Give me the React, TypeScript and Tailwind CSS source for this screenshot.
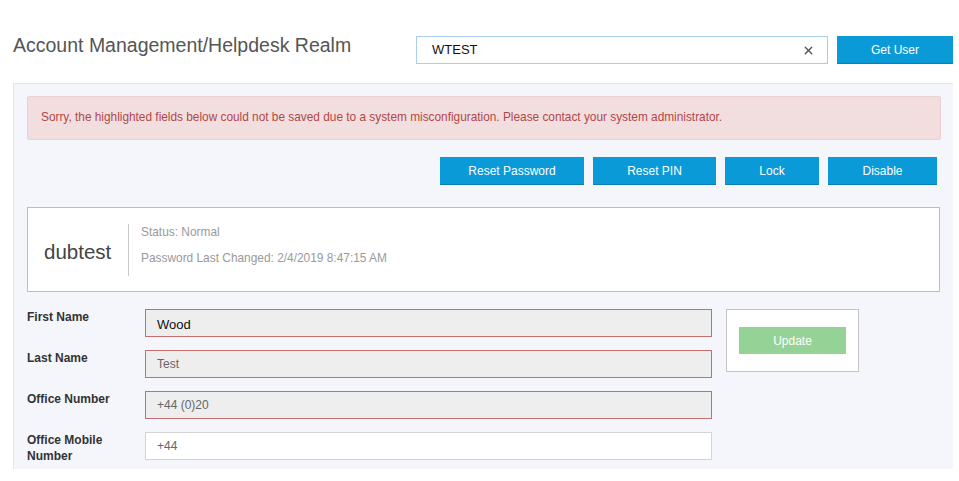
import { X } from "lucide-react";

const fields = [
  { label: "First Name", value: "Wood", error: true, strong: true },
  { label: "Last Name", value: "Test", error: true },
  { label: "Office Number", value: "+44 (0)20", error: true },
  { label: "Office Mobile Number", value: "+44", error: false },
];

const actions = [
  { label: "Reset Password", w: "w-[144px]" },
  { label: "Reset PIN", w: "w-[123px]" },
  { label: "Lock", w: "w-[94px]" },
  { label: "Disable", w: "w-[109px]" },
];

export default function App() {
  return (
    <div className="h-[481px] w-[959px] overflow-hidden bg-white font-['Liberation_Sans',Arial,sans-serif]">
      {/* header */}
      <header className="flex h-[83px] items-center pl-[13px] pt-[36px] pb-[19px]">
        <h1 className="mb-[10px] w-[403px] text-[19.5px] leading-[28px] text-[#555]">
          Account Management/Helpdesk Realm
        </h1>
        <div className="flex h-[28px] w-[412px] items-center border border-[#a9cdee] bg-white pl-[15px] pr-[12px]">
          <span className="flex-1 text-[13px] text-[#111]">WTEST</span>
          <X size={13} strokeWidth={2.5} className="text-[#555]" />
        </div>
        <button className="ml-[9px] h-[28px] w-[116px] border-b border-[#0a7fb4] bg-[#0b9ad8] text-[12px] text-white">
          Get User
        </button>
      </header>

      {/* panel */}
      <section className="ml-[13px] h-[386px] w-[940px] overflow-hidden border-l border-t border-[#e3e5ee] bg-[#f5f6fb] pl-[13px] pr-[12px] pt-[12px]">
        <div className="flex h-[44px] items-center rounded-[2px] border border-[#ecd0d0] bg-[#f2dede] pl-[13px] text-[11.85px] text-[#b0484a]">
          Sorry, the highlighted fields below could not be saved due to a system misconfiguration. Please contact your system administrator.
        </div>

        <div className="mt-[17px] flex justify-end gap-[9px] pr-[4px]">
          {actions.map((a) => (
            <button
              key={a.label}
              className={`${a.w} h-[28px] border-b border-[#0a7fb4] bg-[#0b9ad8] text-[12px] text-white`}
            >
              {a.label}
            </button>
          ))}
        </div>

        <div className="mt-[22px] flex h-[85px] w-[913px] items-center border border-[#bdbdbd] bg-white pl-[16px]">
          <div className="mt-[5px] w-[68px] text-[20.5px] text-[#444]">dubtest</div>
          <div className="ml-[16px] h-[52px] w-px bg-[#c8c8c8]" />
          <div className="mb-[10px] ml-[12px] text-[11.9px] leading-[26px] text-[#9a9a9a]">
            <div>Status: Normal</div>
            <div>Password Last Changed: 2/4/2019 8:47:15 AM</div>
          </div>
        </div>

        <div className="mt-[17px] flex gap-[14px]">
          <div className="flex flex-col gap-[13px]">
            {fields.map((f) => (
              <div key={f.label} className="flex">
                <div className="w-[118px] pr-[12px] text-[12px] font-bold leading-[16px] text-[#333]">
                  {f.label}
                </div>
                <div
                  className={`flex h-[28px] w-[567px] items-center border pl-[11px] ${
                    f.error
                      ? "border-[#c46e6e] bg-[#eeeeee]"
                      : "border-[#d4d4d4] bg-white"
                  } ${f.strong ? "pt-[4px] text-[13px] text-[#111]" : "text-[12px] text-[#666]"}`}
                >
                  {f.value}
                </div>
              </div>
            ))}
          </div>
          <div className="flex h-[63px] w-[133px] items-center justify-center border border-[#c4c4c4] bg-white">
            <button className="h-[27px] w-[107px] bg-[#95d295] text-[12px] text-white">
              Update
            </button>
          </div>
        </div>
      </section>
    </div>
  );
}
